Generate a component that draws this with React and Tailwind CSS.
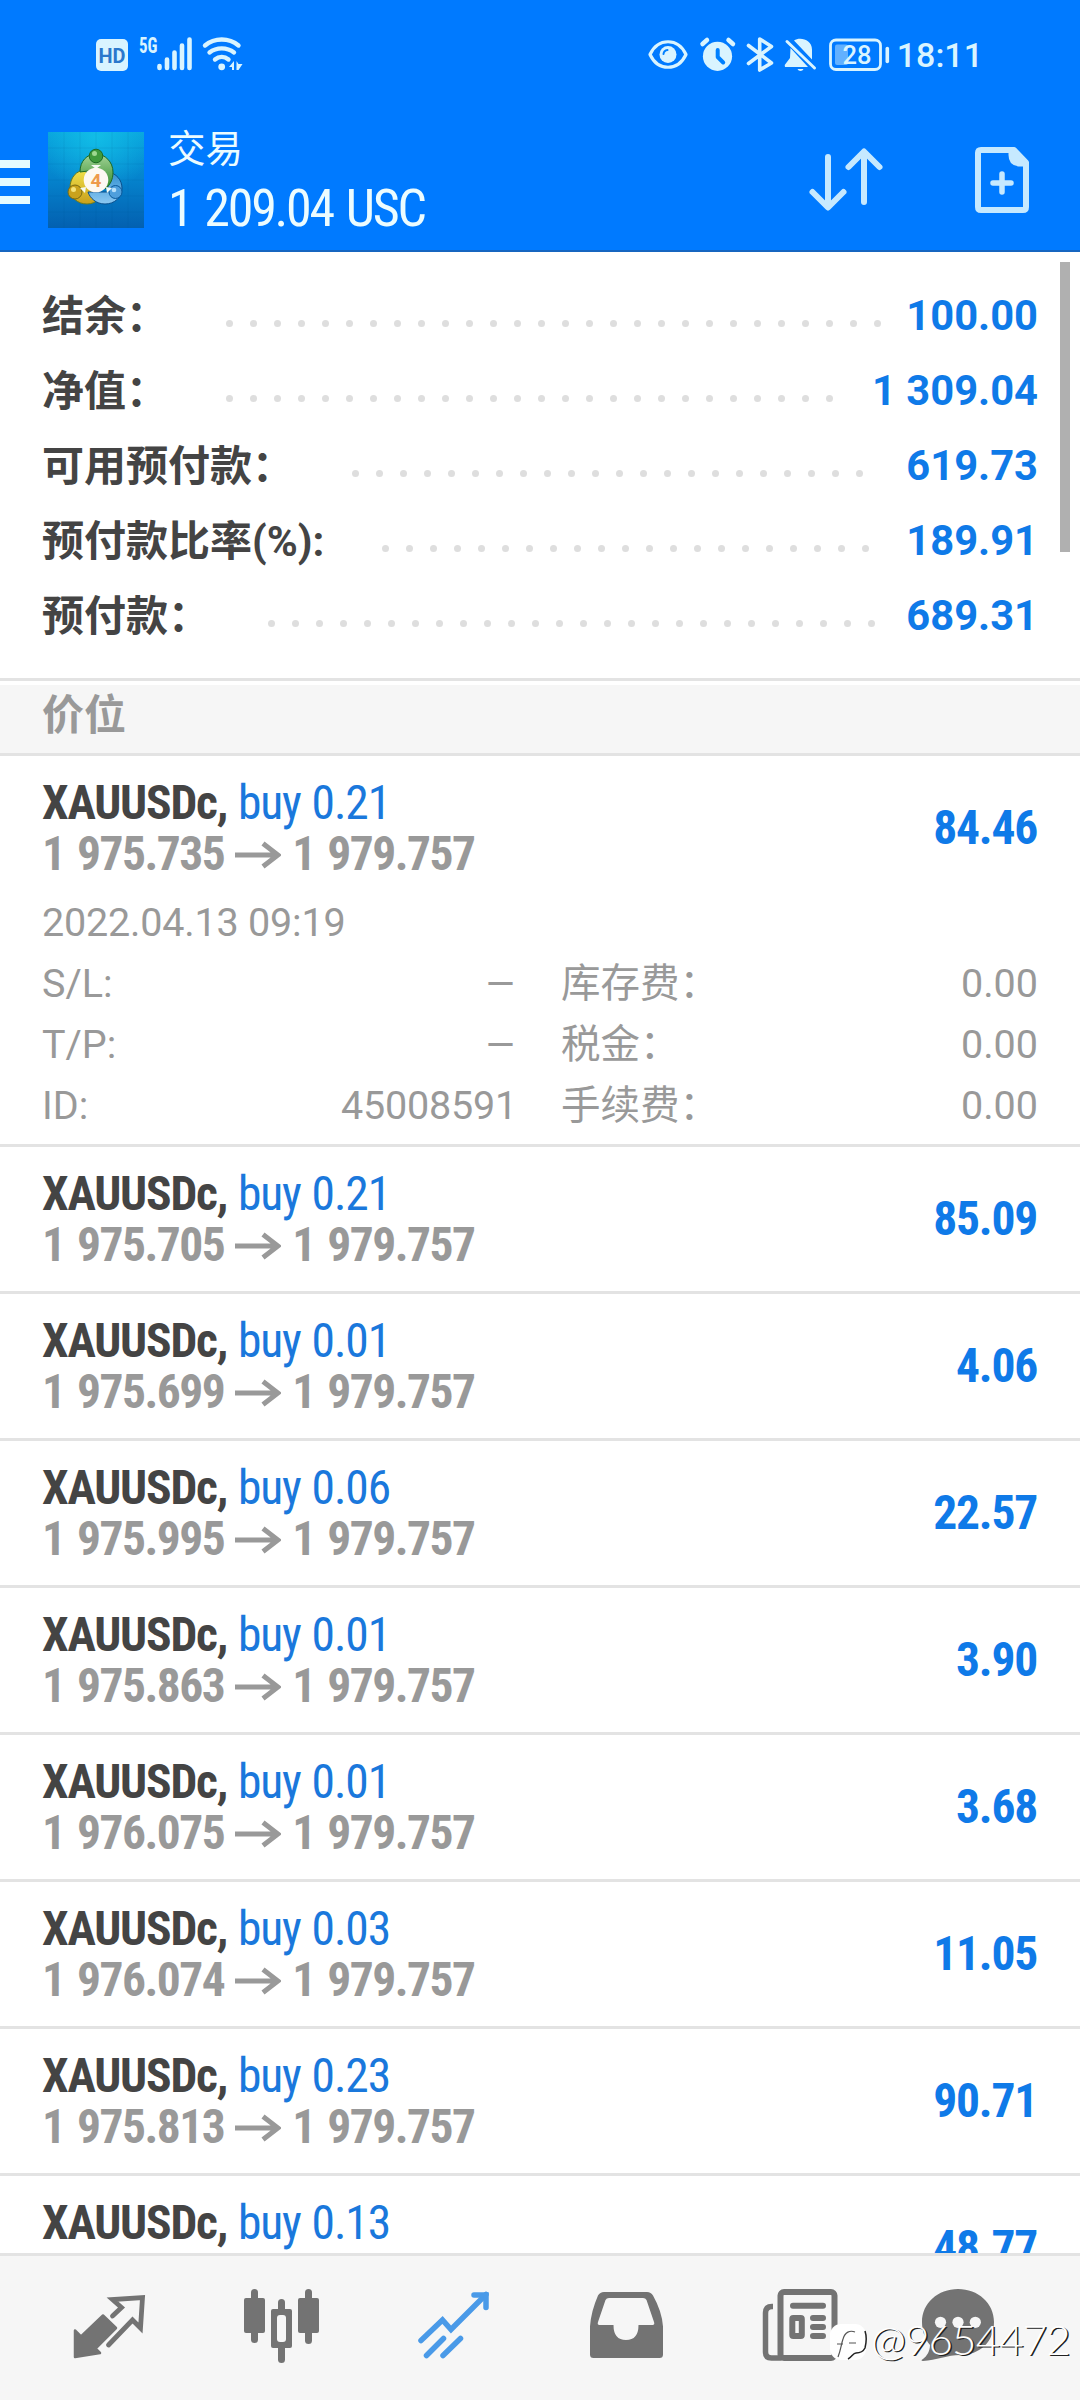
import React from 'react';

const summary = [
  { label: '结余：', value: '100.00', dots: 28 },
  { label: '净值：', value: '1 309.04', dots: 26 },
  { label: '可用预付款：', value: '619.73', dots: 22 },
  { label: '预付款比率(%):', value: '189.91', dots: 21 },
  { label: '预付款：', value: '689.31', dots: 26 },
];

const positions = [
  {
    volume: '0.21',
    open: '1 975.735',
    profit: '84.46',
    details: {
      time: '2022.04.13 09:19',
      rows: [
        ['S/L:', '–', '库存费：', '0.00'],
        ['T/P:', '–', '税金：', '0.00'],
        ['ID:', '45008591', '手续费：', '0.00'],
      ],
    },
  },
  { volume: '0.21', open: '1 975.705', profit: '85.09' },
  { volume: '0.01', open: '1 975.699', profit: '4.06' },
  { volume: '0.06', open: '1 975.995', profit: '22.57' },
  { volume: '0.01', open: '1 975.863', profit: '3.90' },
  { volume: '0.01', open: '1 976.075', profit: '3.68' },
  { volume: '0.03', open: '1 976.074', profit: '11.05' },
  { volume: '0.23', open: '1 975.813', profit: '90.71' },
  // last row slides under the bottom bar, only its first line is visible
  { volume: '0.13', profit: '48.77' },
];

function StatusBar() {
  return (
    <div className="flex h-[110px] items-start justify-between pt-[30px] pr-[97px] pl-24 text-[#d9f4ff]">
      <svg width="150" height="46" viewBox="0 0 150 46" fill="currentColor">
        <rect x="0" y="9" width="32" height="32" rx="5" />
        <text x="2.5" y="32.5" fontSize="21" textLength="27" lengthAdjust="spacingAndGlyphs" className="fill-[#2b78cc] font-['Roboto'] font-bold">HD</text>
        <text x="43" y="22.5" fontSize="22" textLength="18.5" lengthAdjust="spacingAndGlyphs" className="font-['Roboto_Condensed'] font-bold">5G</text>
        <g stroke="currentColor" strokeWidth="4.6" strokeLinecap="round">
          <path d="M63.5 36v2M71 29.5v8.500M78.5 22.5v15.500M86 15.5v22.500M93.5 9.500v28.500" />
        </g>
        <g fill="none" stroke="currentColor" strokeWidth="4.4" strokeLinecap="round">
          <path d="M109 15.5c9.500-8 24-8 33.500 0" />
          <path d="M113.5 22.5c7-5.500 17.500-5.500 24.500 0" />
          <path d="M119 29.5c4-3.300 9.500-3.300 13.500 0" />
        </g>
        <circle cx="125.7" cy="36.8" r="3.4" />
        <path d="M138 31v9h-2v-3h-3zM140.500 31v9h2l4-6h-4z" />
      </svg>
      <div className="flex">
        <svg width="254" height="46" viewBox="0 0 254 46" fill="none" stroke="currentColor" strokeLinecap="round" strokeLinejoin="round">
          {/* eye comfort */}
          <path d="M10 24.500c8-17 28-17 36 0c-8 17-28 17-36 0z" strokeWidth="3.2" />
          <circle cx="28" cy="24.5" r="8.5" fill="currentColor" stroke="none" />
          <path d="M23.500 24a4.500 4.500 0 0 1 4-4" stroke="#0080ff" strokeWidth="2" />
          {/* alarm */}
          <circle cx="77.5" cy="26.3" r="14.6" fill="currentColor" stroke="none" />
          <path d="M77.700 20v7l5.500 5.500" stroke="#0080ff" strokeWidth="4" />
          <path d="M62.500 14l4.500-4M88.500 10l4.500 4" strokeWidth="4.5" />
          {/* bluetooth */}
          <path d="M108.500 15.500l23 17.500l-11.800 7v-31l11.800 7.500l-23 17" strokeWidth="3.6" />
          {/* muted bell */}
          <path d="M150.500 18l17.500 19h-23l-.3-2l5.300-7zM154 10.500c6-4 18-1 18 9v10z" fill="currentColor" stroke="none" />
          <path d="M147 11.500l27.500 26.500" strokeWidth="3" />
          <path d="M157.500 39h6c-1 2.500-5 2.500-6 0z" fill="currentColor" stroke="none" />
          {/* battery */}
          <rect x="190.5" y="10" width="50" height="29.5" rx="5.5" strokeWidth="2.8" />
          <rect x="195" y="14.5" width="13" height="20.5" rx="2" fill="currentColor" fillOpacity="0.45" stroke="none" />
          <path d="M247.300 18.500v13" strokeWidth="3.6" />
          <text x="202.5" y="34" fontSize="25.5" fill="currentColor" stroke="none" className="font-['Roboto'] font-medium">28</text>
        </svg>
        <span className="mt-[5px] ml-[3px] text-[34px] leading-10 font-medium">18:11</span>
      </div>
    </div>
  );
}

function Logo() {
  return (
    <svg width="96" height="96" viewBox="0 0 96 96">
      <defs>
        <linearGradient id="bg" x1="0" y1="0" x2="0" y2="1">
          <stop offset="0" stopColor="#08a3dc" />
          <stop offset="0.5" stopColor="#0582cc" />
          <stop offset="1" stopColor="#0360b0" />
        </linearGradient>
        <radialGradient id="glow" cx="0.5" cy="0.05" r="0.6">
          <stop offset="0" stopColor="#14c4ea" stopOpacity="0.8" />
          <stop offset="1" stopColor="#14c4ea" stopOpacity="0" />
        </radialGradient>
        <linearGradient id="green" x1="0" y1="0" x2="0" y2="1">
          <stop offset="0" stopColor="#a4d498" />
          <stop offset="1" stopColor="#2f8a2a" />
        </linearGradient>
        <linearGradient id="yellow" x1="0" y1="0" x2="0" y2="1">
          <stop offset="0" stopColor="#f0e04a" />
          <stop offset="1" stopColor="#c9a01c" />
        </linearGradient>
        <linearGradient id="blue" x1="0" y1="0" x2="0" y2="1">
          <stop offset="0" stopColor="#2f8fd0" />
          <stop offset="1" stopColor="#8cc8f2" />
        </linearGradient>
      </defs>
      <rect width="96" height="96" fill="url(#bg)" />
      <rect width="96" height="96" fill="url(#glow)" />
      <path d="M0 16h96M0 32h96M0 48h96M0 64h96M0 80h96M16 0v96M32 0v96M48 0v96M64 0v96M80 0v96" stroke="#004a90" strokeOpacity="0.1" />
      <path d="M38 38c-10 0-16 8-16 18c0 10 8 16 17 16c5 0 9-2 12-5L40 52z" fill="url(#yellow)" stroke="#6b7a1c" />
      <path d="M60 40c8 1 14 8 14 16c0 10-8 16-17 16c-9 0-15-6-17-12l20 0z" fill="url(#blue)" stroke="#0a4f8c" />
      <path d="M32 40c0-11 7-18 16-18s17 8 17 18c0 8-3 13-8 17L48 38z" fill="url(#green)" stroke="#1d6a24" />
      <circle cx="48" cy="24" r="6.8" fill="#3f9a3c" stroke="#1d6a24" />
      <circle cx="46.5" cy="21.5" r="2.5" fill="#9ed890" />
      <circle cx="27" cy="60" r="7" fill="#c9a21c" stroke="#7a6a10" />
      <circle cx="25.5" cy="57.5" r="2.5" fill="#f4e27a" />
      <circle cx="67.5" cy="60" r="6.5" fill="#4f9fdc" stroke="#0a5a9c" />
      <circle cx="66" cy="58" r="2.3" fill="#b8e0fa" />
      <path d="M43 33l5 4l5-4zM32 56l6-1l-1 6zM64 56l-6-1l1 6z" fill="#f4faf4" />
      <circle cx="48" cy="48" r="12.3" fill="#fdf8f2" />
      <text x="48" y="55" textAnchor="middle" fontSize="19" className="fill-[#ee9a4c] font-['Roboto'] font-bold">4</text>
    </svg>
  );
}

function Header() {
  return (
    <header className="h-[252px] border-b-2 border-[#1766c0] bg-[#007aff]">
      <StatusBar />
      <div className="flex items-start">
        <div className="mt-[50px] flex w-[30px] flex-col gap-[10px]">
          <div className="h-2 bg-[#e4fbff]"></div>
          <div className="h-2 bg-[#e4fbff]"></div>
          <div className="h-2 bg-[#e4fbff]"></div>
        </div>
        <div className="mt-[22px] ml-[18px]">
          <Logo />
        </div>
        <div className="mt-[17px] ml-6 flex flex-col text-[#ecfcff]">
          <span className="h-[51px] text-[37.5px] leading-[44px]">交易</span>
          <span className="font-['Roboto_Condensed'] text-[52px] leading-[62px] tracking-[-2.2px] [word-spacing:3px]">1 209.04 USC</span>
        </div>
        <div className="ml-auto flex pt-[30px] pr-10 text-[#c6e9ff]">
          <svg width="90" height="80" viewBox="0 0 90 80" fill="none" stroke="currentColor" strokeWidth="6" strokeLinecap="round" strokeLinejoin="round">
            <path d="M28 17v50M12.500 52L28 67.500L43.500 52" />
            <path d="M64 62v-50M48.500 27L64 11.500L79.500 27" />
          </svg>
          <svg className="ml-20" width="70" height="80" viewBox="0 0 70 80" fill="none" stroke="currentColor" strokeWidth="6" strokeLinecap="round" strokeLinejoin="round">
            <path d="M11 10h33l12 12.500v44.500q0 3-3 3h-42q-3 0-3-3v-54q0-3 3-3z" />
            <path d="M40 11v4q0 10 11 10h4l-11-14z" fill="currentColor" strokeWidth="3" />
            <path d="M32 34v18M23 43h18" strokeWidth="5.5" />
          </svg>
        </div>
      </div>
    </header>
  );
}

function SummaryRow({ label, value, dots }) {
  return (
    <div className="flex h-[75px] items-center justify-between text-[42px] leading-[75px] font-bold">
      <div className="flex items-center">
        <span className="pt-[2px] text-[#444]">{label}</span>
        <div className="mt-4 ml-[58px] flex gap-[17px]">
          {Array.from({ length: dots }).map((_, i) => (
            <span key={i} className="h-[7px] w-[7px] rounded-full bg-[#dedede]"></span>
          ))}
        </div>
      </div>
      <span className="text-[41.7px] text-[#0f7ae8]">{value}</span>
    </div>
  );
}

function PositionRow({ position }) {
  const { volume, open, profit, details } = position;
  return (
    <div className="border-b-[3px] border-[#e3e3e3] px-[42px]">
      <div className="flex h-36 items-center justify-between pt-[2px] font-['Roboto_Condensed'] text-[47.5px] tracking-[-1.5px] [word-spacing:3px]">
        <div className="h-[102px] leading-[51px]">
          <div className="[word-spacing:1px]">
            <span className="font-bold tracking-[-1.2px] text-[#444]">XAUUSDc,</span>
            <span className="tracking-[-1.1px] text-[#1a78dc]"> buy {volume}</span>
          </div>
          {open && (
            <div className="flex items-center font-bold text-[#999]">
              <span>{open}</span>
              <svg className="mx-[11px]" width="46" height="28" viewBox="0 0 46 28" fill="none" stroke="currentColor" strokeWidth="5">
                <path d="M0 14h43M28 2.500l15 11.500l-15 11.500" />
              </svg>
              <span>1 979.757</span>
            </div>
          )}
        </div>
        <span className="pr-px font-bold tracking-[-1.2px] text-[#0f7ae8]">{profit}</span>
      </div>
      {details && (
        <div className="-mt-2 pb-2 text-[39.5px] leading-[62px] text-[#999]">
          <div className="h-[61px] tracking-[-0.2px]">{details.time}</div>
          {details.rows.map(([a, b, c, d]) => (
            <div key={a} className="flex h-[61px] justify-between">
              <div className="flex w-[475px] justify-between">
                <span>{a}</span>
                {b === '–' ? (
                  <span className="origin-right scale-x-125">{b}</span>
                ) : (
                  <span className="tracking-[-0.2px]">{b}</span>
                )}
              </div>
              <div className="flex w-[477px] justify-between">
                <span>{c}</span>
                <span>{d}</span>
              </div>
            </div>
          ))}
        </div>
      )}
    </div>
  );
}

function BottomNav() {
  return (
    <nav className="relative flex h-[147px] shrink-0 border-t-[3px] border-[#e3e3e3] bg-[#f6f6f6] pl-6 text-[#737373]">
      {/* Quotes */}
      <svg width="172" height="144" viewBox="0 0 172 144" fill="none" stroke="currentColor" strokeLinejoin="round" strokeLinecap="round">
        <path d="M51 74.500l6 6l22-21l13 12.500l-20.500 20.500l4.500 4.500l-25 4z" fill="currentColor" strokeWidth="2.5" />
        <path d="M88.500 60l9-8.500l-9-8l30-2l-2 30.500l-8-8l-24 25" strokeWidth="4.8" strokeLinejoin="miter" />
      </svg>
      {/* Charts */}
      <svg width="172" height="144" viewBox="0 0 172 144" fill="currentColor">
        <rect x="48" y="42" width="21" height="35" rx="2" />
        <rect x="55" y="33" width="7" height="54" rx="3.5" />
        <rect x="75" y="53" width="21" height="39" rx="2" />
        <rect x="82" y="43" width="7" height="64" rx="3.5" />
        <rect x="81" y="59" width="9" height="27" rx="3" fill="#f6f6f6" />
        <rect x="102" y="42" width="21" height="35" rx="2" />
        <rect x="109" y="33" width="7" height="55" rx="3.5" />
      </svg>
      {/* Trade */}
      <svg className="text-[#4a9ae8]" width="172" height="144" viewBox="0 0 172 144" fill="none" stroke="currentColor" strokeWidth="5.5" strokeLinecap="round" strokeLinejoin="round">
        <path d="M53 84.500l21.500-20.500l8.500 9.500l35-35" strokeLinejoin="miter" />
        <path d="M106 39h12v12.500" strokeLinejoin="miter" />
        <path d="M58.500 99.500l17-17M75 99.500l17.500-17" />
      </svg>
      {/* History */}
      <svg width="172" height="144" viewBox="0 0 172 144" fill="currentColor" fillRule="evenodd">
        <path d="M64 36h43q4 0 6 3.500q9 16 10 31v28q0 3.500-3.500 3.500h-66q-3.500 0-3.500-3.500v-28q1-15 8-31q2-3.500 6-3.500zM69 42q-2.500 0-3.500 2l-7.500 22q-1 3 1.500 3h14q0 15 12.500 15q12.500 0 12.500-15h14q2.500 0 1.500-3l-7.500-22q-1-2-3.500-2z" />
      </svg>
      {/* News */}
      <svg width="172" height="144" viewBox="0 0 172 144" fill="none" stroke="currentColor" strokeWidth="6" strokeLinecap="round">
        <rect x="68.5" y="36" width="54" height="66" rx="3.5" />
        <path d="M61 50.500h-1q-6.500 0-6.500 6.500v39q0 6 6 6h10" strokeWidth="5.5" strokeLinecap="butt" />
        <path d="M81 49.700h30M101 62h10M101 71h10M101 80h10" />
        <rect x="80.3" y="62" width="9.5" height="18" rx="1" />
      </svg>
      {/* Mailbox */}
      <svg width="172" height="144" viewBox="0 0 172 144" fill="currentColor">
        <path d="M74 33c20 0 36 14 36 33c0 20-14 33-34 33c-12 0-24 5-37 6c-2 0-2-1 0-2c4-3 7-8 7-14c-5-6-8-14-8-23c0-19 16-33 36-33z" />
        <g fill="#f6f6f6">
          <circle cx="56.5" cy="66.3" r="5.6" />
          <circle cx="74" cy="66.3" r="5.6" />
          <circle cx="91.3" cy="66.3" r="5.6" />
        </g>
      </svg>

      {/* Author mark over the bar */}
      <div className="absolute top-[58px] left-[829px] flex items-center text-white">
        <svg width="40" height="44" viewBox="0 0 40 44" fill="none">
          <rect x="1" y="7" width="36" height="36" rx="11" fill="white" />
          <path d="M9 40c3-8 3-12 5-18c2-7 7-9 12-7M8 27h6M20 26h7" stroke="#555" strokeWidth="1.2" />
          <path d="M36 14c2 6 1 13 0 17c-2 4-5 5-9 5c-3 0-4 4-8 6" stroke="#222" strokeWidth="1.5" />
        </svg>
        <span className="ml-[2px] font-['Lato'] text-[42px] leading-[50px] font-light tracking-[-0.8px] [text-shadow:1.5px_1px_0_#222]">@9654472</span>
      </div>
    </nav>
  );
}

function App() {
  return (
    <div className="flex h-[2400px] w-[1080px] flex-col overflow-hidden bg-white font-['Roboto','Noto_Sans_CJK_SC',sans-serif]">
      <Header />
      <main className="relative min-h-0 flex-1 overflow-hidden">
        <section className="px-[42px] pt-[26px] pb-[25px]">
          {summary.map((row) => (
            <SummaryRow key={row.label} {...row} />
          ))}
        </section>

        <div className="border-y-[3px] border-[#e3e3e3] pt-1">
          <h2 className="h-[68px] bg-[#f6f6f6] pl-[42px] text-[42px] leading-[61px] font-bold text-[#999]">价位</h2>
        </div>

        {positions.map((position, i) => (
          <PositionRow key={i} position={position} />
        ))}

        {/* Scroll indicator */}
        <div className="absolute top-[10px] right-[10px] h-[290px] w-[10px] bg-[#b0b0b0]"></div>
      </main>
      <BottomNav />
    </div>
  );
}

export default App;
